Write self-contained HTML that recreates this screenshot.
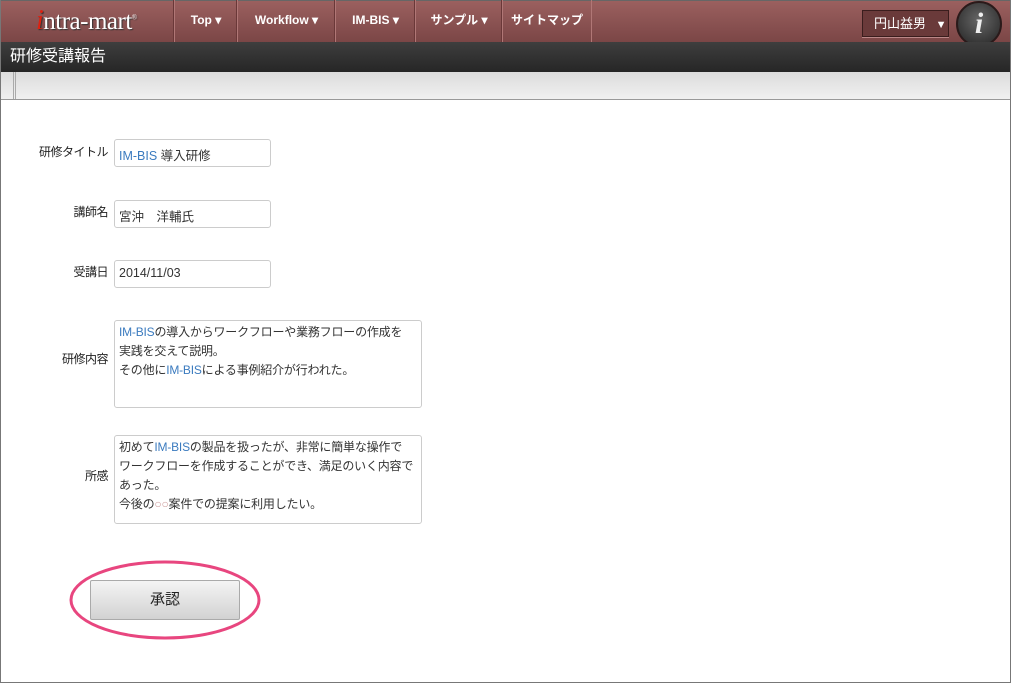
<!DOCTYPE html>
<html><head><meta charset="utf-8"><style>
*{box-sizing:border-box;margin:0;padding:0}
body{width:1011px;height:683px;overflow:hidden;background:#fff;font-family:"Liberation Sans","Noto Sans CJK JP",sans-serif;position:relative}
.frame{position:absolute;left:0;top:0;width:1011px;height:683px;border:1px solid #777;border-top:none}
.hdr{position:absolute;left:0;top:0;width:1011px;height:42px;background:linear-gradient(#9b605f,#7b4646);border-top:1px solid #666}
.nav{position:absolute;top:0;height:42px;color:#fff;font-weight:bold;font-size:12px;line-height:40px;text-align:center;border-left:1px solid #b07776;box-shadow:-1px 0 0 #6a3838}
.logo{position:absolute;left:36px;top:5px;font-family:"Liberation Serif",serif;font-size:25px;color:#fff;text-shadow:1px 1px 1px #333;letter-spacing:-0.5px}
.title{position:absolute;left:0;top:42px;width:1011px;height:30px;background:linear-gradient(#3e3e3e,#262626);color:#fff;font-size:16px;line-height:30px;padding-left:10px}
.tool{position:absolute;left:1px;top:72px;width:1009px;height:28px;background:linear-gradient(#dcdcdc,#f0f0f0);border-bottom:1px solid #999}
.lbl{position:absolute;font-size:12px;color:#222;text-align:right;width:100px;left:8px;white-space:nowrap;letter-spacing:-0.5px}
.inp{position:absolute;left:114px;border:1px solid #ccc;border-radius:3px;font-size:12.5px;color:#333;padding:5px 4px;background:#fff;white-space:nowrap}
.ta{line-height:19px;padding:2px 4px;font-size:12px;letter-spacing:-0.2px}
.b{color:#3b7bbf}
</style></head><body>
<div class="hdr"></div>
<div class="logo"><span style="color:#d21;font-style:italic;font-size:28px">i</span>ntra-mart<sup style="font-size:7px">®</sup></div>
<div class="nav" style="left:174px;width:63px">Top ▾</div>
<div class="nav" style="left:237px;width:98px">Workflow ▾</div>
<div class="nav" style="left:335px;width:80px">IM-BIS ▾</div>
<div class="nav" style="left:415px;width:87px">サンプル ▾</div>
<div class="nav" style="left:502px;width:90px;border-right:1px solid #b07776">サイトマップ</div>
<div style="position:absolute;left:862px;top:10px;width:87px;height:27px;border:1px solid #3a1d1d;background:#6a3a3a;box-shadow:0 1px 0 #b88;color:#fff;font-size:13px;line-height:25px;padding-left:11px">円山益男 <span style="font-size:11px;margin-left:6px">▼</span></div>
<div style="position:absolute;left:956px;top:1px;width:46px;height:46px;border-radius:50%;background:radial-gradient(circle at 50% 40%,#666,#222);border:2px solid #2a1a1a;color:#eee;font:italic bold 30px/42px 'Liberation Serif',serif;text-align:center">i</div>
<div class="title">研修受講報告</div>
<div class="tool"><div style="position:absolute;left:12px;top:0;width:3px;height:27px;border-left:1px solid #aaa;border-right:1px solid #aaa"></div></div>
<div class="frame"></div>

<div class="lbl" style="top:143px">研修タイトル</div>
<div class="inp" style="top:139px;width:157px;height:28px"><span class="b">IM-BIS</span> 導入研修</div>
<div class="lbl" style="top:203px">講師名</div>
<div class="inp" style="top:200px;width:157px;height:28px">宮沖　洋輔氏</div>
<div class="lbl" style="top:263px">受講日</div>
<div class="inp" style="top:260px;width:157px;height:28px">2014/11/03</div>
<div class="lbl" style="top:350px">研修内容</div>
<div class="inp ta" style="top:320px;width:308px;height:88px"><span class="b">IM-BIS</span>の導入からワークフローや業務フローの作成を<br>実践を交えて説明。<br>その他に<span class="b">IM-BIS</span>による事例紹介が行われた。</div>
<div class="lbl" style="top:467px">所感</div>
<div class="inp ta" style="top:435px;width:308px;height:89px">初めて<span class="b">IM-BIS</span>の製品を扱ったが、非常に簡単な操作で<br>ワークフローを作成することができ、満足のいく内容で<br>あった。<br>今後の<span style="color:#c99">○○</span>案件での提案に利用したい。</div>

<div style="position:absolute;left:90px;top:580px;width:150px;height:40px;border:1px solid #aaa;border-radius:2px;background:linear-gradient(#f4f4f4,#d2d2d2);font-size:15px;text-align:center;line-height:38px;color:#222">承認</div>
<svg style="position:absolute;left:0;top:0" width="1011" height="683"><ellipse cx="165" cy="600" rx="94" ry="38" fill="none" stroke="#e8467f" stroke-width="3"/></svg>
</body></html>
